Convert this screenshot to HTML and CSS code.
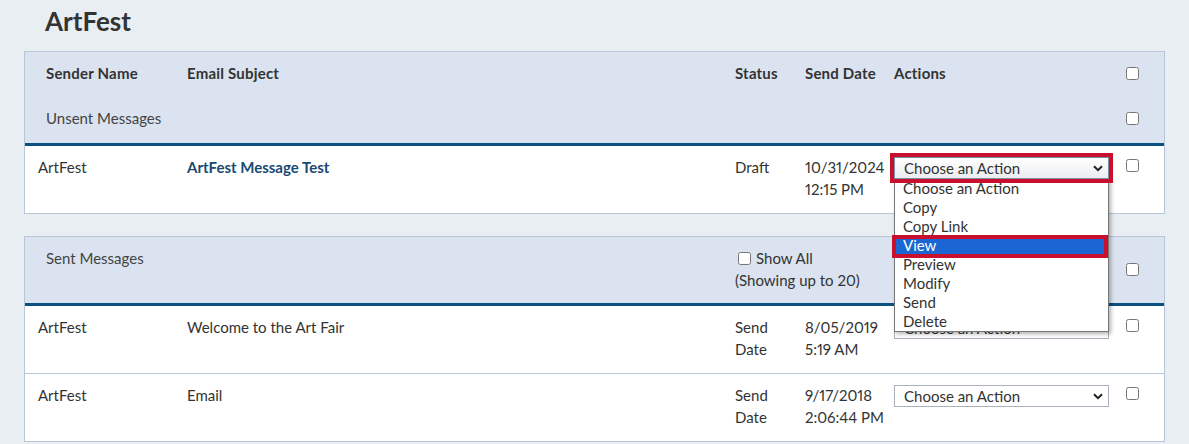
FILE: index.html
```html
<!DOCTYPE html>
<html lang="en">
<head>
<meta charset="utf-8">
<title>ArtFest</title>
<link rel="stylesheet" href="styles.css">
</head>
<body>
<div class="page">
  <h1 class="title">ArtFest</h1>

  <section class="panel">
    <div class="thead">
      <div class="row hrow">
        <div class="th first">Sender Name</div>
        <div class="th">Email Subject</div>
        <div class="th">Status</div>
        <div class="th">Send Date</div>
        <div class="th">Actions</div>
        <div class="cbcell"><input type="checkbox" class="cb"></div>
      </div>
      <div class="row hrow">
        <div class="group first span2">Unsent Messages</div>
        <div></div><div></div><div></div>
        <div class="cbcell"><input type="checkbox" class="cb"></div>
      </div>
    </div>
    <div class="tbody">
      <div class="row drow">
        <div class="td first">ArtFest</div>
        <div class="td"><a class="subject" href="#">ArtFest Message Test</a></div>
        <div class="td">Draft</div>
        <div class="td">10/31/2024<br>12:15 PM</div>
        <div class="td">
          <div class="selectwrap">
            <div class="select focused">
              <span>Choose an Action</span>
              <svg class="chev" width="10" height="7" viewBox="0 0 10 7"><path d="M1 1.2l4 4 4-4" fill="none" stroke="#222" stroke-width="2"/></svg>
            </div>
            <ul class="menu">
              <li>Choose an Action</li>
              <li>Copy</li>
              <li>Copy Link</li>
              <li class="active">View</li>
              <li>Preview</li>
              <li>Modify</li>
              <li>Send</li>
              <li>Delete</li>
            </ul>
          </div>
        </div>
        <div class="cbcell top"><input type="checkbox" class="cb"></div>
      </div>
    </div>
  </section>

  <section class="panel">
    <div class="thead sent">
      <div class="row hrow">
        <div class="group first span2 self-top">Sent Messages</div>
        <div class="showall span2">
          <label class="showlabel"><input type="checkbox" class="cb inline">Show All</label><br>
          (Showing up to 20)
        </div>
        <div></div>
        <div class="cbcell"><input type="checkbox" class="cb"></div>
      </div>
    </div>
    <div class="tbody">
      <div class="row drow">
        <div class="td first">ArtFest</div>
        <div class="td">Welcome to the Art Fair</div>
        <div class="td">Send<br>Date</div>
        <div class="td">8/05/2019<br>5:19 AM</div>
        <div class="td">
          <div class="select">
            <span>Choose an Action</span>
            <svg class="chev" width="10" height="7" viewBox="0 0 10 7"><path d="M1 1.2l4 4 4-4" fill="none" stroke="#222" stroke-width="2"/></svg>
          </div>
        </div>
        <div class="cbcell top"><input type="checkbox" class="cb"></div>
      </div>
      <div class="row drow">
        <div class="td first">ArtFest</div>
        <div class="td">Email</div>
        <div class="td">Send<br>Date</div>
        <div class="td">9/17/2018<br>2:06:44 PM</div>
        <div class="td">
          <div class="select">
            <span>Choose an Action</span>
            <svg class="chev" width="10" height="7" viewBox="0 0 10 7"><path d="M1 1.2l4 4 4-4" fill="none" stroke="#222" stroke-width="2"/></svg>
          </div>
        </div>
        <div class="cbcell top"><input type="checkbox" class="cb"></div>
      </div>
    </div>
  </section>
</div>
</body>
</html>
```

FILE: styles.css
```css
* { box-sizing: border-box; }
html, body { margin: 0; padding: 0; }
body {
  background: #e9eef3;
  font-family: Lato, "Noto Sans", sans-serif;
  font-size: 15px;
  line-height: 22px;
  color: #333;
  overflow: hidden;
  font-variant-numeric: proportional-nums;
}
.page { padding: 0 25px 0 24px; }
.title {
  margin: 0 0 9px 21px;
  font-size: 26px;
  line-height: 42px;
  font-weight: 700;
  color: #333;
}
.panel {
  background: #fff;
  border: 1px solid #b7c7d9;
  width: 1141px;
  margin-bottom: 22px;
}
.thead {
  background: #dae3ef;
  padding: 10px 0 14px;
  display: flex;
  flex-direction: column;
  gap: 23px;
}
.thead.sent { padding: 10px 0 12px; }
.row {
  display: grid;
  grid-template-columns: 162px 548px 70px 89px 232px 1fr;
}
.hrow { align-items: center; }
.th { font-weight: 700; color: #333; letter-spacing: 0.2px; }
.th.first, .group.first { padding-left: 21px; }
.group { color: #444; }
.span2 { grid-column: span 2; }
.self-top { align-self: start; }
.tbody { border-top: 3px solid #0c4f81; }
.drow {
  padding: 10px 0 13px;
  align-items: start;
}
.drow + .drow { border-top: 1px solid #b7c7d9; }
.td { color: #333; }
.td.first { padding-left: 13px; }
.subject {
  color: #1a4a72;
  font-weight: 700;
  text-decoration: none;
}
.cbcell { display: flex; align-items: center; }
.cbcell.top { margin-top: 3px; }
.cb { margin: 0; width: 13px; height: 13px; }
.cb.inline { margin: 0 5px 0 3px; vertical-align: -1px; }
.showall { color: #333; }

.selectwrap {
  position: relative;
  z-index: 10;
  width: 215px;
  margin-top: 1px;
}
.select {
  position: relative;
  z-index: 2;
  width: 215px;
  height: 22px;
  border: 1px solid #a9b1ba;
  background: #fff;
  display: flex;
  align-items: center;
  justify-content: space-between;
  padding: 0 5px 0 9px;
  color: #333;
  margin-top: 1px;
}
.selectwrap .select { margin-top: 0; }
.select.focused {
  background: linear-gradient(#ffffff, #ebedf0);
  border-color: #7d8fa3;
  outline: 4px solid #c8102e;
}
.chev { display: block; }
.menu {
  position: absolute;
  z-index: 1;
  left: 0;
  top: calc(100% - 1px);
  width: 215px;
  margin: 0;
  padding: 0;
  list-style: none;
  background: #fff;
  border: 1px solid #767676;
  box-shadow: 2px 2px 4px rgba(0, 0, 0, 0.3);
}
.menu li {
  height: 19px;
  line-height: 19px;
  padding-left: 8px;
  color: #333;
}
.menu li.active {
  position: relative;
  background: #1b66d2;
  color: #fff;
}
.menu li.active::after {
  content: "";
  position: absolute;
  left: -3px;
  right: 0;
  top: -1px;
  bottom: -3px;
  border: 4px solid #c8102e;
}
```
